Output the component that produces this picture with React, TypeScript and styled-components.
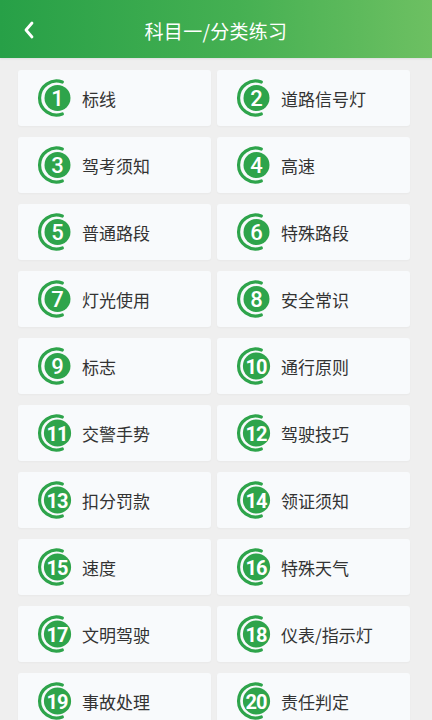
import styled, { createGlobalStyle } from 'styled-components';

const GlobalStyle = createGlobalStyle`
    html, body {
        margin: 0;
        padding: 0;
        background: #efefef;
    }
    body {
        font-family: "Noto Sans CJK SC", "Noto Sans", sans-serif;
        overflow: hidden;
    }
`

const categories = [
    '标线', '道路信号灯',
    '驾考须知', '高速',
    '普通路段', '特殊路段',
    '灯光使用', '安全常识',
    '标志', '通行原则',
    '交警手势', '驾驶技巧',
    '扣分罚款', '领证须知',
    '速度', '特殊天气',
    '文明驾驶', '仪表/指示灯',
    '事故处理', '责任判定',
]

const Page = styled.div`
    width: 432px;
    height: 720px;
    overflow: hidden;
    background: #efefef;
`

const Header = styled.div`
    height: 58px;
    display: flex;
    align-items: center;
    justify-content: center;
    position: relative;
    background: linear-gradient(90deg, #27a047 0%, #45b052 55%, #6dc062 100%);
    box-shadow: 0 1px 2px rgba(0, 0, 0, 0.08);
`

const BackButton = styled.div`
    position: absolute;
    left: 19px;
    top: 19px;
    width: 20px;
    height: 22px;
    display: flex;
    align-items: center;
    justify-content: center;
`

const Title = styled.div`
    color: #ffffff;
    font-size: 19px;
    letter-spacing: 0.3px;
    margin-top: 2px;
`

const Grid = styled.div`
    display: grid;
    grid-template-columns: 193px 193px;
    column-gap: 6px;
    row-gap: 11px;
    padding: 12px 22px 0 18px;
`

const Card = styled.div`
    height: 56px;
    display: flex;
    align-items: center;
    padding-left: 19px;
    box-sizing: border-box;
    background: #f8fafc;
    border-radius: 3px;
    box-shadow: 0 1px 2px rgba(0, 0, 0, 0.03);
`

const Label = styled.span`
    margin-left: 5px;
    font-size: 17px;
    color: #333333;
    white-space: nowrap;
`

const Num = styled.text<{ $wide: boolean }>`
    font-family: Roboto, "Liberation Sans", sans-serif;
    font-weight: ${p => (p.$wide ? 700 : 500)};
    font-size: ${p => (p.$wide ? '20px' : '22px')};
    letter-spacing: ${p => (p.$wide ? '-1px' : '0')};
    fill: #ffffff;
`

// ring open on the right, filled disc with the number inside
const Badge = ({ n }: { n: number }) => {
    const wide = n > 9
    const r = wide ? 13.6 : 13
    return (
        <svg width="40" height="38" viewBox="0 0 40 38">
            <path
                d="M 25.3 3 A 17 17 0 1 0 25.3 35"
                fill="none"
                stroke="#2ea44b"
                strokeWidth="3.2"
                strokeLinecap="round"
            />
            <circle cx="20.5" cy="19" r={r} fill="#2ea44b" />
            <Num $wide={wide} x={wide ? 20 : 20.5} y="26.8" textAnchor="middle">{n}</Num>
        </svg>
    )
}

const App = () => {
    return (
        <Page>
            <GlobalStyle />
            <Header>
                <BackButton>
                    <svg width="12" height="20" viewBox="0 0 12 20">
                        <path d="M 9 3 L 3 10 L 9 17" fill="none" stroke="#ffffff" strokeWidth="2.8" strokeLinecap="round" strokeLinejoin="round" />
                    </svg>
                </BackButton>
                <Title>科目一/分类练习</Title>
            </Header>
            <Grid>
                {categories.map((c, i) => (
                    <Card key={c}>
                        <Badge n={i + 1} />
                        <Label>{c}</Label>
                    </Card>
                ))}
            </Grid>
        </Page>
    )
}

export default App
